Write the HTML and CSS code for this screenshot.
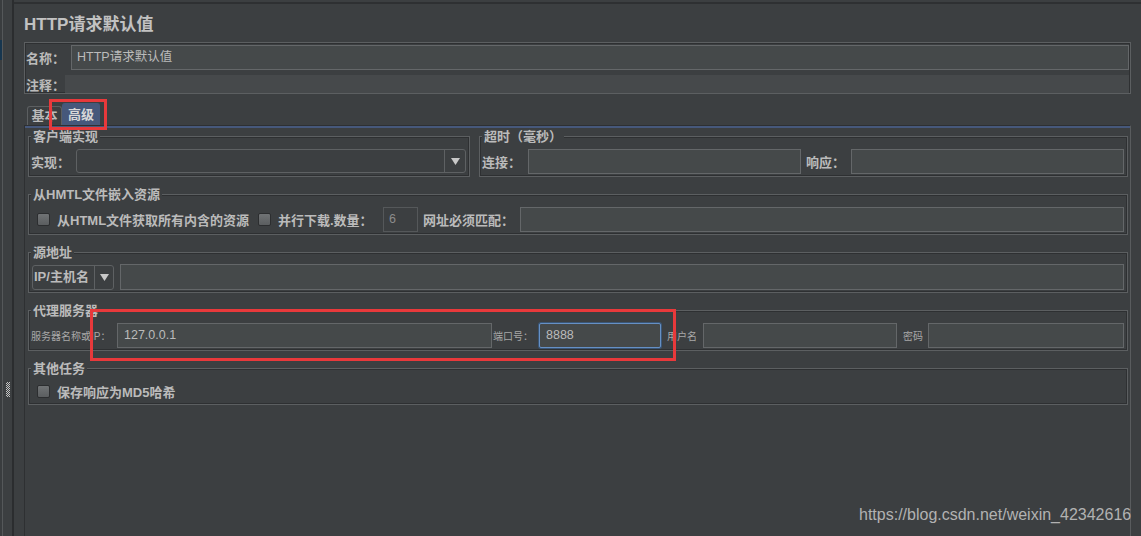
FILE: index.html
```html
<!DOCTYPE html>
<html lang="zh-CN">
<head>
<meta charset="utf-8">
<title>HTTP请求默认值</title>
<link rel="stylesheet" href="styles.css">
</head>
<body>
<div class="app">
  <aside class="sidebar">
    <div class="sb-sel"></div>
    <div class="sb-grip"></div>
  </aside>
  <main class="main">
    <h1 class="title">HTTP请求默认值</h1>
    <div class="namepanel">
      <div class="nrow"><span class="nlabel">名称：</span><div class="field">HTTP请求默认值</div></div>
      <div class="nrow nrow-c"><span class="nlabel nlabel-c">注释：</span><div class="area"></div></div>
    </div>
    <div class="tabs">
      <div class="tab">基本</div>
      <div class="tab tab-on">高级</div>
    </div>
    <div class="tabpanel">
      <div class="rowA">
        <fieldset class="grp grp-client">
          <legend>客户端实现</legend>
          <div class="line">
            <span class="lbl w-impl">实现：</span>
            <div class="combo combo-impl">
              <div class="combo-val"></div>
              <div class="combo-btn"><svg viewBox="0 0 9 7"><polygon points="0,0 9,0 4.5,7"/></svg></div>
            </div>
          </div>
        </fieldset>
        <fieldset class="grp grp-timeout">
          <legend>超时（毫秒）</legend>
          <div class="line">
            <span class="lbl w-conn">连接：</span>
            <div class="field"></div>
            <span class="lbl w-resp">响应：</span>
            <div class="field"></div>
          </div>
        </fieldset>
      </div>
      <fieldset class="grp">
        <legend>从HMTL文件嵌入资源</legend>
        <div class="line">
          <span class="cb cb-first"></span>
          <span class="lbl w-b1">从HTML文件获取所有内含的资源</span>
          <span class="cb"></span>
          <span class="lbl w-b2">并行下载.数量：</span>
          <div class="field field-off w-6">6</div>
          <span class="lbl w-b3">网址必须匹配：</span>
          <div class="field"></div>
        </div>
      </fieldset>
      <fieldset class="grp">
        <legend>源地址</legend>
        <div class="line">
          <div class="combo combo-ip">
            <div class="combo-val">IP/主机名</div>
            <div class="combo-btn combo-btn-ip"><svg viewBox="0 0 9 7"><polygon points="0,0 9,0 4.5,7"/></svg></div>
          </div>
          <div class="field field-ip"></div>
        </div>
      </fieldset>
      <fieldset class="grp">
        <legend>代理服务器</legend>
        <div class="line">
          <span class="sm w-d1">服务器名称或IP：</span>
          <div class="field w-host">127.0.0.1</div>
          <span class="sm w-d2">端口号：</span>
          <div class="field field-focus w-port">8888</div>
          <span class="sm w-d3">用户名</span>
          <div class="field w-user"></div>
          <span class="sm w-d4">密码</span>
          <div class="field"></div>
        </div>
      </fieldset>
      <fieldset class="grp">
        <legend>其他任务</legend>
        <div class="line line-e">
          <span class="cb cb-first"></span>
          <span class="lbl w-e1">保存响应为MD5哈希</span>
        </div>
      </fieldset>
    </div>
  </main>
  <div class="mark mark-1"></div>
  <div class="mark mark-2"></div>
  <div class="watermark">https://blog.csdn.net/weixin_42342616</div>
</div>
</body>
</html>
```

FILE: styles.css
```css
* { box-sizing: border-box; }

body {
  margin: 0;
  background: #3c3f41;
}

.app {
  position: relative;
  width: 1141px;
  height: 536px;
  display: flex;
  overflow: hidden;
  background: #3c3f41;
  color: #bbbbbb;
  font-family: "Liberation Sans", "Noto Sans CJK SC", sans-serif;
}

/* left strip */
.sidebar {
  width: 14px;
  flex: none;
  display: flex;
  flex-direction: column;
  border-right: 2px solid #2b2d2f;
  background: linear-gradient(to right, #3a3d3f 0 2px, #55585a 2px 3px, #3c3f41 3px);
}
.sb-sel {
  margin-top: 40px;
  width: 2px;
  height: 20px;
  background: #17364f;
}
.sb-grip {
  margin: 322px 0 0 6px;
  width: 4px;
  height: 15px;
  background: repeating-conic-gradient(#c4c4c4 0 25%, transparent 0 50%) 0 0 / 2px 2px;
}

/* main */
.main {
  flex: 1;
  min-width: 0;
  display: flex;
  flex-direction: column;
  margin-top: 2px;
  border-top: 2px solid #2e3032;
  padding: 0 10px;
}
.title {
  margin: 8px 0 4px;
  font-size: 17px;
  line-height: 26px;
  font-weight: bold;
  color: #c2c2c2;
}

.namepanel {
  border: 1px solid #5c5f61;
  box-shadow: inset 0 0 0 1px #2e3032;
  padding: 2px 1px 0 1px;
}
.nrow {
  display: flex;
  align-items: center;
  height: 25px;
}
.nrow-c {
  margin-top: 5px;
  height: 18px;
}
.nlabel {
  width: 45px;
  flex: none;
  font-size: 13px;
  font-weight: bold;
}
.nlabel-c { width: 39px; }
.area {
  flex: 1;
  height: 18px;
  background: #46494b;
}

.field {
  flex: 1;
  min-width: 0;
  height: 25px;
  border: 1px solid #646769;
  background: #45494a;
  color: #bbbbbb;
  font-size: 12.5px;
  line-height: 23px;
  padding-left: 5px;
  white-space: nowrap;
  overflow: hidden;
}
.field-off {
  background: transparent;
  border-color: #55585a;
  color: #8c8c8c;
}
.field-focus {
  border-color: #6690c4;
  border-radius: 2px;
  box-shadow: 0 0 0 1px #3a5677;
  padding-left: 6px;
}

/* tabs */
.tabs {
  display: flex;
  align-items: flex-end;
  height: 24px;
  margin-top: 7px;
  padding-left: 3px;
}
.tab {
  width: 35px;
  height: 19px;
  border: 1px solid #5c5f61;
  border-bottom: none;
  border-radius: 3px 3px 0 0;
  font-size: 13px;
  font-weight: bold;
  line-height: 18px;
  text-align: center;
}
.tab-on {
  width: 38px;
  height: 22px;
  background: #46587b;
  border-color: #46587b;
  color: #d8d8d8;
  line-height: 21px;
}

.tabpanel {
  flex: 1;
  border-top: 1px solid #2e3032;
  border-left: 1px solid #2e3032;
  border-right: 1px solid #595c5e;
  box-shadow: inset 0 2px 0 #46587b;
  padding: 3px 2px 0 3px;
}

/* groups */
.rowA {
  display: flex;
  gap: 9px;
}
.grp {
  margin: 10px 0 0;
  padding: 4px 3px 2px 2px;
  border: 1px solid #5c5f61;
  box-shadow: inset 0 0 0 1px #2e3032;
  min-width: 0;
}
.rowA .grp { margin-top: 0; }
.grp-client { flex: 0 0 442px; }
.grp-timeout { flex: 1; }
.grp legend {
  padding: 0 2px;
  font-size: 13px;
  font-weight: bold;
  line-height: 15px;
  color: #bbbbbb;
  background: #3c3f41;
  white-space: nowrap;
}

.line {
  display: flex;
  align-items: center;
  height: 26px;
}
.line-e { height: 22px; }

.lbl {
  flex: none;
  font-size: 13px;
  font-weight: bold;
  white-space: nowrap;
}
.sm {
  flex: none;
  font-size: 10px;
  color: #a8a8a8;
  white-space: nowrap;
}

.w-impl { width: 45px; }
.w-conn { width: 46px; }
.w-resp { width: 45px; margin-left: 5px; }
.w-b1 { width: 201px; margin-left: 7px; }
.w-b2 { width: 105px; margin-left: 7px; }
.w-6 { flex: 0 0 35px; }
.w-b3 { width: 97px; margin-left: 5px; }
.w-e1 { margin-left: 7px; }
.w-d1 { width: 86px; }
.w-d2 { width: 46px; margin-left: 1px; }
.w-d3 { width: 36px; margin-left: 6px; }
.w-d4 { width: 25px; margin-left: 6px; }
.w-host { flex: 0 0 375px; padding-left: 6px; }
.w-port { flex: 0 0 122px; }
.w-user { flex: 0 0 194px; }

/* combo boxes */
.combo {
  display: flex;
  height: 24px;
  border: 1px solid #5e6163;
  border-radius: 3px;
  background: #3c3f41;
}
.combo-impl { flex: 1; }
.combo-ip {
  flex: 0 0 82px;
  margin-left: 1px;
  height: 25px;
}
.combo-val {
  flex: 1;
  font-size: 13px;
  font-weight: bold;
  line-height: 22px;
  padding-left: 1px;
  white-space: nowrap;
}
.combo-btn {
  width: 21px;
  flex: none;
  border-left: 1px solid #5e6163;
  display: flex;
  align-items: center;
  justify-content: center;
}
.combo-btn-ip { width: 19px; }
.combo-btn svg {
  width: 9px;
  height: 7px;
  fill: #c8c8c8;
}
.field-ip { margin-left: 6px; height: 26px; }

/* checkboxes */
.cb {
  width: 13px;
  height: 13px;
  flex: none;
  border: 1px solid #2c2e30;
  border-radius: 2px;
  background: linear-gradient(#707375, #5b5e60);
}
.cb-first { margin-left: 6px; }

/* annotations */
.mark {
  position: absolute;
  border: 3px solid #e8393b;
}
.mark-1 { left: 49px; top: 99px; width: 58px; height: 31px; }
.mark-2 { left: 90px; top: 309px; width: 586px; height: 52px; }

.watermark {
  position: absolute;
  left: 859px;
  top: 506px;
  font-family: "Liberation Sans", sans-serif;
  font-size: 16px;
  color: #b2b2b2;
  white-space: nowrap;
}
```
